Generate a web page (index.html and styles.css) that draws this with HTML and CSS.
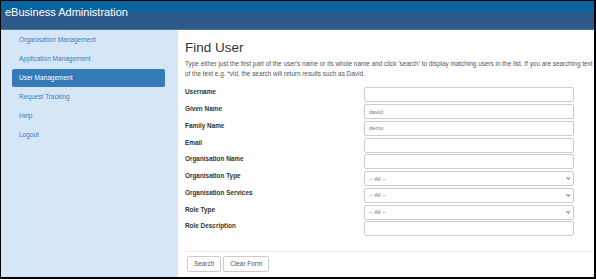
FILE: index.html
```html
<!DOCTYPE html>
<html>
<head>
    <title>eBusiness Administration</title>
    <link rel="stylesheet" href="styles.css">
</head>
<body>
    <div class="frame">
        <div class="header">
            <span class="brand">eBusiness Administration</span>
        </div>
        <div class="page">
            <!-- Menu lateral -->
            <div class="sidebar">
                <a href="#" class="nav-item">Organisation Management</a>
                <a href="#" class="nav-item">Application Management</a>
                <a href="#" class="nav-item active">User Management</a>
                <a href="#" class="nav-item">Request Tracking</a>
                <a href="#" class="nav-item">Help</a>
                <a href="#" class="nav-item">Logout</a>
            </div>

            <!-- Contenido principal -->
            <div class="main">
                <h1>Find User</h1>
                <p class="intro">
                    <span>Type either just the first part of the user's name or its whole name and click 'search' to display matching users in the list. If you are searching text in the middle of a name, put an asterisk at the start</span>
                    <span>of the text e.g. *vid, the search will return results such as David.</span>
                </p>

                <form class="search-form">
                    <label>Username</label>
                    <input type="text" value="">
                    <label>Given Name</label>
                    <input type="text" value="david">
                    <label>Family Name</label>
                    <input type="text" value="demo">
                    <label>Email</label>
                    <input type="text" value="">
                    <label>Organisation Name</label>
                    <input type="text" value="">
                    <label>Organisation Type</label>
                    <div class="select-wrap"><select><option>-- All --</option></select></div>
                    <label>Organisation Services</label>
                    <div class="select-wrap"><select><option>-- All --</option></select></div>
                    <label>Role Type</label>
                    <div class="select-wrap"><select><option>-- All --</option></select></div>
                    <label>Role Description</label>
                    <input type="text" value="">
                </form>

                <div class="actions">
                    <button type="button">Search</button>
                    <button type="button">Clear Form</button>
                </div>
            </div>
        </div>
    </div>
</body>
</html>
```

FILE: styles.css
```css
body {
    margin: 0;
    padding: 0;
    font-family: "Liberation Sans", Arial, sans-serif;
    color: #333;
    background-color: #fff;
}

/* Marco negro de la captura */
.frame {
    width: 596px;
    height: 279px;
    box-sizing: border-box;
    border-style: solid;
    border-color: #000;
    border-width: 1px 2px 2px 1px;
    display: flex;
    flex-direction: column;
    overflow: hidden;
}

.header {
    height: 29px;
    flex: none;
    padding: 5px 0 0 4px;
    box-sizing: border-box;
    background: linear-gradient(#0a64a0 0 11px, #2e5a8b 11px 28px, #4d77a3 28px 29px);
}

.brand {
    color: #fff;
    font-size: 11px;
    line-height: 13px;
    display: block;
}

.page {
    flex: 1;
    display: flex;
    min-height: 0;
}

.sidebar {
    width: 177px;
    flex: none;
    background-color: #d5e7f6;
    padding: 1px 13px 0 11px;
    box-sizing: border-box;
    display: flex;
    flex-direction: column;
    gap: 1px;
}

.nav-item {
    display: block;
    height: 18px;
    line-height: 18px;
    padding-left: 7px;
    font-size: 6.5px;
    color: #3d7bbd;
    text-decoration: none;
    border-radius: 2px;
}

.nav-item.active {
    background-color: #337ab7;
    color: #fff;
}

.main {
    flex: 1;
    min-width: 0;
    padding-left: 7px;
    overflow: hidden;
}

.main h1 {
    margin: 10px 0 0;
    font-size: 13.5px;
    line-height: 16px;
    font-weight: normal;
    color: #333;
}

.intro {
    margin: 3px 0 0;
    font-size: 6.4px;
    line-height: 10px;
    color: #555;
}

.intro span {
    display: block;
    white-space: nowrap;
}

.search-form {
    margin-top: 8.3px;
    display: grid;
    grid-template-columns: 179px 210px;
    grid-auto-rows: 15px;
    row-gap: 1.75px;
}

.search-form label {
    font-size: 6.4px;
    font-weight: bold;
    line-height: 8px;
    padding-top: 1px;
    color: #333;
}

.search-form input,
.search-form select {
    display: block;
    width: 100%;
    height: 15px;
    box-sizing: border-box;
    margin: 0;
    border: 1px solid #ccc;
    border-radius: 2px;
    padding: 0 0 0 4px;
    font-family: "Liberation Sans", Arial, sans-serif;
    font-size: 5.8px;
    color: #777;
    background-color: #fff;
    outline: none;
}

.select-wrap {
    position: relative;
    height: 15px;
}

.search-form select {
    appearance: none;
    -webkit-appearance: none;
}

/* Flecha del desplegable */
.select-wrap::after {
    content: "";
    position: absolute;
    right: 5px;
    top: 5px;
    width: 1.5px;
    height: 1.5px;
    border-right: 1px solid #777;
    border-bottom: 1px solid #777;
    transform: rotate(45deg);
    pointer-events: none;
}

.actions {
    margin-top: 14.5px;
    border-top: 1px solid #eee;
    padding: 4px 0 0 2px;
    display: flex;
    gap: 2px;
}

.actions button {
    height: 16px;
    padding: 0 6px;
    border: 1px solid #ccc;
    border-radius: 2px;
    background-color: #fff;
    font-family: "Liberation Sans", Arial, sans-serif;
    font-size: 6.4px;
    color: #555;
}
```
